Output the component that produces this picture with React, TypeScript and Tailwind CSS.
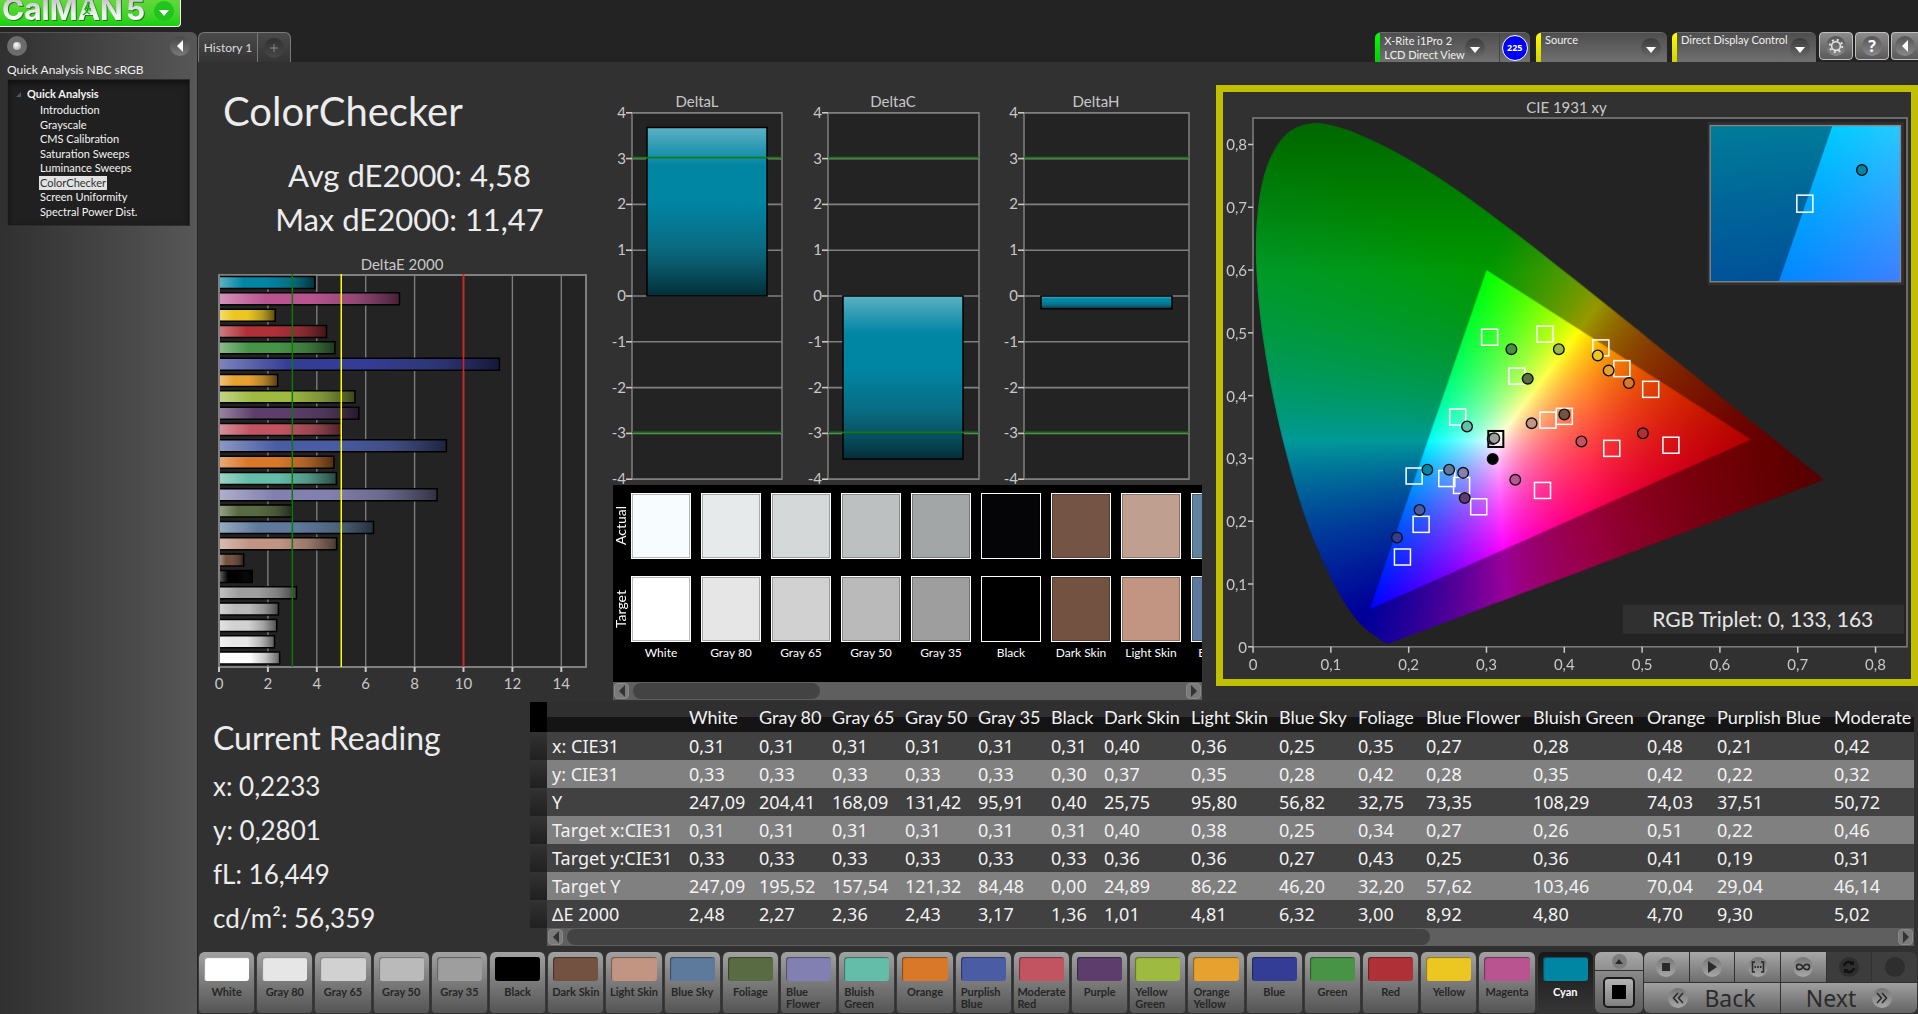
import { useEffect, useRef } from "react";
import type { ReactNode } from "react";
import { clsx } from "clsx";

const UI = "font-[Lato,'Noto_Sans',sans-serif]";
const SEGOE = "font-['Noto_Sans','Open_Sans',sans-serif]";

type Patch = { name: string; color: string; actual?: string; dE: number };

const patches: Patch[] = [
  { name: "White", color: "#ffffff", actual: "#f7fdff", dE: 2.48 },
  { name: "Gray 80", color: "#e6e6e6", actual: "#e6eaeb", dE: 2.27 },
  { name: "Gray 65", color: "#d1d1d1", actual: "#d4d8d9", dE: 2.36 },
  { name: "Gray 50", color: "#bababa", actual: "#bcc0c1", dE: 2.43 },
  { name: "Gray 35", color: "#9e9e9e", actual: "#a2a6a6", dE: 3.17 },
  { name: "Black", color: "#000000", actual: "#050507", dE: 1.36 },
  { name: "Dark Skin", color: "#735242", actual: "#745444", dE: 1.01 },
  { name: "Light Skin", color: "#c29582", actual: "#bf9f8f", dE: 4.81 },
  { name: "Blue Sky", color: "#5d7a9c", actual: "#5f84a1", dE: 6.32 },
  { name: "Foliage", color: "#596b42", dE: 3.0 },
  { name: "Blue Flower", color: "#8280b0", dE: 8.92 },
  { name: "Bluish Green", color: "#63bda8", dE: 4.8 },
  { name: "Orange", color: "#d97829", dE: 4.7 },
  { name: "Purplish Blue", color: "#4a5ca3", dE: 9.3 },
  { name: "Moderate Red", color: "#c25461", dE: 5.02 },
  { name: "Purple", color: "#5c3d6b", dE: 5.72 },
  { name: "Yellow Green", color: "#9eba40", dE: 5.56 },
  { name: "Orange Yellow", color: "#e6a12e", dE: 2.4 },
  { name: "Blue", color: "#333d96", dE: 11.47 },
  { name: "Green", color: "#479447", dE: 4.74 },
  { name: "Red", color: "#b03038", dE: 4.4 },
  { name: "Yellow", color: "#edc721", dE: 2.3 },
  { name: "Magenta", color: "#ba5491", dE: 7.38 },
  { name: "Cyan", color: "#0085a3", dE: 3.92 },
];

const columns = [
  "White", "Gray 80", "Gray 65", "Gray 50", "Gray 35", "Black", "Dark Skin", "Light Skin",
  "Blue Sky", "Foliage", "Blue Flower", "Bluish Green", "Orange", "Purplish Blue", "Moderate",
];

const colWidths = [
  "w-[70px]", "w-[73px]", "w-[73px]", "w-[73px]", "w-[73px]", "w-[53px]", "w-[87px]", "w-[88px]",
  "w-[79px]", "w-[68px]", "w-[107px]", "w-[114px]", "w-[70px]", "w-[117px]", "w-[120px]",
];

const rows: [string, string[]][] = [
  ["x: CIE31", ["0,31", "0,31", "0,31", "0,31", "0,31", "0,31", "0,40", "0,36", "0,25", "0,35", "0,27", "0,28", "0,48", "0,21", "0,42"]],
  ["y: CIE31", ["0,33", "0,33", "0,33", "0,33", "0,33", "0,30", "0,37", "0,35", "0,28", "0,42", "0,28", "0,35", "0,42", "0,22", "0,32"]],
  ["Y", ["247,09", "204,41", "168,09", "131,42", "95,91", "0,40", "25,75", "95,80", "56,82", "32,75", "73,35", "108,29", "74,03", "37,51", "50,72"]],
  ["Target x:CIE31", ["0,31", "0,31", "0,31", "0,31", "0,31", "0,31", "0,40", "0,38", "0,25", "0,34", "0,27", "0,26", "0,51", "0,22", "0,46"]],
  ["Target y:CIE31", ["0,33", "0,33", "0,33", "0,33", "0,33", "0,33", "0,36", "0,36", "0,27", "0,43", "0,25", "0,36", "0,41", "0,19", "0,31"]],
  ["Target Y", ["247,09", "195,52", "157,54", "121,32", "84,48", "0,00", "24,89", "86,22", "46,20", "32,20", "57,62", "103,46", "70,04", "29,04", "46,14"]],
  ["ΔE 2000", ["2,48", "2,27", "2,36", "2,43", "3,17", "1,36", "1,01", "4,81", "6,32", "3,00", "8,92", "4,80", "4,70", "9,30", "5,02"]],
];

const pages = [
  "Introduction", "Grayscale", "CMS Calibration", "Saturation Sweeps",
  "Luminance Sweeps", "ColorChecker", "Screen Uniformity", "Spectral Power Dist.",
];

// CIE 1931 spectral locus, 380-700 nm
const locus: [number, number][] = [
  [0.1741, 0.005], [0.1689, 0.0069], [0.1644, 0.0109],
  [0.1566, 0.0177], [0.144, 0.0297], [0.1355, 0.0399], [0.1241, 0.0578], [0.1096, 0.0868],
  [0.0913, 0.1327], [0.0687, 0.2007], [0.0454, 0.295], [0.0235, 0.4127], [0.0082, 0.5384],
  [0.0039, 0.6548], [0.0139, 0.7502], [0.0389, 0.812], [0.0743, 0.8338], [0.1142, 0.8262],
  [0.1547, 0.8059], [0.1929, 0.7816], [0.2296, 0.7543], [0.2658, 0.7243], [0.3016, 0.6923],
  [0.3373, 0.6589], [0.3731, 0.6245], [0.4087, 0.5896], [0.4441, 0.5547], [0.4788, 0.5202],
  [0.5125, 0.4866], [0.5448, 0.4544], [0.5752, 0.4242], [0.6029, 0.3965], [0.627, 0.3725],
  [0.6482, 0.3514], [0.6658, 0.334], [0.6915, 0.3083], [0.714, 0.2859], [0.726, 0.274],
  [0.734, 0.266],
];

const gamut: [number, number][] = [[0.64, 0.33], [0.3, 0.6], [0.15, 0.06]];

const targets: [number, number][] = [
  [0.304, 0.493], [0.375, 0.498], [0.447, 0.476], [0.474, 0.443], [0.511, 0.41], [0.339, 0.431],
  [0.263, 0.366], [0.379, 0.361], [0.4, 0.367], [0.461, 0.316], [0.537, 0.321], [0.207, 0.272],
  [0.249, 0.268], [0.268, 0.257], [0.29, 0.223], [0.372, 0.249], [0.216, 0.195], [0.192, 0.143],
];

const readings: [number, number, string][] = [
  [0.332, 0.474, "#46923e"], [0.393, 0.474, "#9bb943"], [0.443, 0.464, "#ecc820"],
  [0.457, 0.44, "#e6a22e"], [0.483, 0.42, "#d97829"], [0.353, 0.427, "#596f43"],
  [0.275, 0.351, "#66bdaa"], [0.358, 0.356, "#c19582"], [0.4, 0.37, "#735344"],
  [0.422, 0.327, "#c1525f"], [0.501, 0.34, "#af3138"], [0.308, 0.331, "#666666"],
  [0.31, 0.332, "#a0a0a0"], [0.308, 0.299, "#000000"], [0.224, 0.282, "#0085a3"],
  [0.252, 0.282, "#5d7a9c"], [0.27, 0.277, "#8580b1"], [0.337, 0.266, "#bb5493"],
  [0.272, 0.237, "#5c3d6b"], [0.214, 0.218, "#4a5ba5"], [0.185, 0.174, "#313c96"],
];

function chromaColor(x: number, y: number) {
  const X = x / y;
  const Z = (1 - x - y) / y;
  const lin = [
    3.2406 * X - 1.5372 - 0.4986 * Z,
    -0.9689 * X + 1.8758 + 0.0415 * Z,
    0.0557 * X - 0.204 + 1.057 * Z,
  ].map((v) => Math.max(0, v));
  const peak = Math.max(...lin);
  const fade = 1 - 1.5 * Math.max(0, x - 0.43) - 1.4 * Math.max(0, y - 0.6);
  return lin.map((v) => (255 * fade * v) / peak);
}

type FieldProps = { width: number; height: number; x0: number; y0: number; sx: number; sy: number };

// Chromaticity colour field; x0/y0 are the values at the bottom left corner
function ColorField({ width, height, x0, y0, sx, sy }: FieldProps) {
  const ref = useRef<HTMLCanvasElement>(null);

  useEffect(() => {
    const ctx = ref.current?.getContext("2d");
    if (!ctx) return;
    const image = ctx.createImageData(width, height);
    for (let j = 0; j < height; j++) {
      const y = Math.max(0.002, y0 + (height - j) / sy);
      for (let i = 0; i < width; i++) {
        const [r, g, b] = chromaColor(x0 + i / sx, y);
        image.data.set([r, g, b, 255], (j * width + i) * 4);
      }
    }
    ctx.globalCompositeOperation = "source-over";
    ctx.putImageData(image, 0, 0);

    const toPx = ([x, y]: [number, number]) => [(x - x0) * sx, height - (y - y0) * sy];

    // everything outside the sRGB triangle is dimmed
    ctx.beginPath();
    ctx.rect(0, 0, width, height);
    gamut.map(toPx).forEach(([px, py], n) => (n === 0 ? ctx.moveTo(px, py) : ctx.lineTo(px, py)));
    ctx.closePath();
    ctx.fillStyle = "rgba(0,0,0,0.4)";
    ctx.fill("evenodd");

    // cut to the locus, smoothed through its points
    const pts = locus.map(toPx);
    ctx.globalCompositeOperation = "destination-in";
    ctx.fillStyle = "#000";
    ctx.beginPath();
    ctx.moveTo(pts[0][0], pts[0][1]);
    for (let n = 0; n < pts.length - 1; n++) {
      const a = pts[Math.max(0, n - 1)];
      const b = pts[n];
      const c = pts[n + 1];
      const d = pts[Math.min(pts.length - 1, n + 2)];
      ctx.bezierCurveTo(
        b[0] + (c[0] - a[0]) / 6, b[1] + (c[1] - a[1]) / 6,
        c[0] - (d[0] - b[0]) / 6, c[1] - (d[1] - b[1]) / 6,
        c[0], c[1]
      );
    }
    ctx.closePath();
    ctx.fill();
  }, [width, height, x0, y0, sx, sy]);

  return <canvas ref={ref} width={width} height={height} className="block" />;
}

const label = "fill-[#c8c8c8] font-[Lato,'Noto_Sans',sans-serif] text-[15px]";

function DeltaEChart() {
  const bars = [...patches].reverse();
  const px = (v: number) => 21 + v * 24.45;
  return (
    <svg viewBox="0 0 403 450" className="block w-full" role="img" aria-label="DeltaE 2000 per patch">
      <defs>
        <linearGradient id="shadeX">
          <stop offset="0" stopColor="#fff" stopOpacity=".36" />
          <stop offset=".25" stopColor="#fff" stopOpacity="0" />
          <stop offset=".5" stopColor="#222" stopOpacity="0" />
          <stop offset=".75" stopColor="#222" stopOpacity=".25" />
          <stop offset="1" stopColor="#000" stopOpacity=".62" />
        </linearGradient>
      </defs>
      <text x="204" y="20" textAnchor="middle" className={label}>DeltaE 2000</text>
      <rect x="21" y="25" width="367" height="392" fill="#232323" stroke="#808080" strokeWidth="2" />
      {[2, 4, 6, 8, 10, 12, 14].map((v) => (
        <line key={v} x1={px(v)} x2={px(v)} y1="26" y2="416" stroke="#7c7c7c" strokeWidth="1.4" />
      ))}
      {bars.map((p, i) => {
        const y = 26.5 + i * 16.33;
        const w = p.dE * 24.45 - 1;
        return (
          <g key={p.name}>
            <rect x="22" y={y} width={w} height="12" fill={p.color} />
            <rect x="22" y={y} width={w} height="12" fill="url(#shadeX)" />
            <path d={`M22 ${y}h${w}v12h${-w}`} fill="none" stroke="#000" strokeWidth="1.5" />
          </g>
        );
      })}
      <line x1={px(3)} x2={px(3)} y1="24" y2="417" stroke="#0a7a0a" strokeWidth="1.5" />
      <line x1={px(5)} x2={px(5)} y1="24" y2="417" stroke="#ffff00" strokeWidth="1.5" />
      <line x1={px(10)} x2={px(10)} y1="24" y2="417" stroke="#f01818" strokeWidth="1.5" />
      {[0, 2, 4, 6, 8, 10, 12, 14].map((v) => (
        <g key={v}>
          <line x1={px(v)} x2={px(v)} y1="417" y2="422" stroke="#c8c8c8" strokeWidth="2" />
          <text x={px(v)} y="439" textAnchor="middle" className={label}>{v}</text>
        </g>
      ))}
    </svg>
  );
}

type DeltaPlot = { title: string; center: number; left: number; right: number; bar: [number, number]; value: number };

const deltaPlots: DeltaPlot[] = [
  { title: "DeltaL", center: 96, left: 31, right: 181, bar: [46, 166], value: 3.68 },
  { title: "DeltaC", center: 292, left: 227, right: 378, bar: [242, 362], value: -3.56 },
  { title: "DeltaH", center: 495, left: 423, right: 588, bar: [440, 571], value: -0.28 },
];

function DeltaCharts() {
  const py = (v: number) => 206 - v * 45.8;
  return (
    <svg viewBox="0 0 609 395" className="block w-full" role="img" aria-label="DeltaL, DeltaC and DeltaH">
      <defs>
        <linearGradient id="shadeY" x2="0" y2="1">
          <stop offset="0" stopColor="#fff" stopOpacity=".36" />
          <stop offset=".23" stopColor="#fff" stopOpacity="0" />
          <stop offset=".45" stopColor="#222" stopOpacity="0" />
          <stop offset=".7" stopColor="#222" stopOpacity=".25" />
          <stop offset="1" stopColor="#000" stopOpacity=".66" />
        </linearGradient>
      </defs>
      {deltaPlots.map(({ title, center, left, right, bar, value }) => {
        const top = Math.min(py(value), py(0));
        const box = { x: bar[0], y: top, width: bar[1] - bar[0], height: Math.abs(py(value) - py(0)) };
        return (
          <g key={title}>
            <text x={center} y="17" textAnchor="middle" className={label}>{title}</text>
            <rect x={left} y={py(4)} width={right - left} height={py(-4) - py(4)} fill="#232323" stroke="#808080" strokeWidth="1.5" />
            {[4, 3, 2, 1, 0, -1, -2, -3, -4].map((v) => (
              <g key={v}>
                <line x1={left} x2={right} y1={py(v)} y2={py(v)} stroke="#808080" strokeWidth="1.6" />
                <line x1={left - 6} x2={left} y1={py(v)} y2={py(v)} stroke="#c8c8c8" strokeWidth="1.6" />
                <text x={left - 6} y={py(v) + 5} textAnchor="end" className={label}>{v}</text>
              </g>
            ))}
            <rect {...box} fill="#0085a3" />
            <rect {...box} fill="url(#shadeY)" stroke="#000" strokeWidth="1.5" />
            {[3, -3].map((v) => (
              <line key={v} x1={left} x2={right} y1={py(v) - 1} y2={py(v) - 1} stroke="#107a10" strokeWidth="1.8" />
            ))}
          </g>
        );
      })}
    </svg>
  );
}

function CieChart() {
  const px = (x: number) => 30 + x * 777;
  const py = (y: number) => 554 - y * 627;
  return (
    <svg viewBox="0 0 687 586" className="block w-full" role="img" aria-label="CIE 1931 xy chromaticity diagram">
      <text x="343" y="21" textAnchor="middle" className={label}>CIE 1931 xy</text>
      <rect x="30" y="26" width="653" height="528" fill="#232323" stroke="#808080" strokeWidth="1.5" />
      <foreignObject x="31" y="27" width="651" height="526">
        <ColorField width={651} height={526} x0={0.0013} y0={0.0016} sx={777} sy={627} />
      </foreignObject>
      {[0, 1, 2, 3, 4, 5, 6, 7, 8].map((n) => {
        const text = n === 0 ? "0" : `0,${n}`;
        return (
          <g key={n}>
            <line x1={px(n / 10)} x2={px(n / 10)} y1="554" y2="560" stroke="#c8c8c8" strokeWidth="1.5" />
            <line x1="25" x2="30" y1={py(n / 10)} y2={py(n / 10)} stroke="#c8c8c8" strokeWidth="1.5" />
            <text x={px(n / 10)} y="577" textAnchor="middle" className={label}>{text}</text>
            <text x="24" y={py(n / 10) + 6} textAnchor="end" className={label}>{text}</text>
          </g>
        );
      })}
      {targets.map(([x, y]) => (
        <rect key={`${x}-${y}`} x={px(x) - 8} y={py(y) - 8} width="16" height="16" fill="none" stroke="#fff" strokeWidth="1.5" />
      ))}
      <rect x={px(0.312) - 7.5} y={py(0.331) - 8} width="15" height="16" fill="none" stroke="#000" strokeWidth="2" />
      {readings.map(([x, y, fill]) => (
        <circle key={fill} cx={px(x)} cy={py(y)} r="5.3" fill={fill} stroke="#111" strokeWidth="1.4" />
      ))}

      <rect x="484" y="30" width="196" height="163" fill="#303030" />
      <foreignObject x="487" y="34" width="189" height="155">
        <ColorField width={189} height={155} x0={0.183} y0={0.246} sx={3650} sy={2950} />
      </foreignObject>
      <rect x="486.5" y="33.5" width="190" height="156" fill="none" stroke="#8a8a8a" strokeWidth="1.3" />
      <rect x="573" y="103" width="16" height="17" fill="none" stroke="#fff" strokeWidth="1.5" />
      <circle cx="638" cy="78" r="5.3" fill="#0085a3" stroke="#111" strokeWidth="1.4" />

      <rect x="399" y="512" width="281" height="29" fill="#303030" />
      <text x="539" y="534" textAnchor="middle" className="fill-[#e6e6e6] font-[Lato,sans-serif] text-[21px]">
        RGB Triplet: 0, 133, 163
      </text>
    </svg>
  );
}

function Caret() {
  return (
    <span className="grid size-5 shrink-0 place-items-center rounded-full bg-linear-to-b from-[#3c3c3c] to-[#6a6a6a]">
      <svg viewBox="0 0 10 6" className="mt-1 h-1.5 w-2.5"><path d="M0 0h10L5 6z" fill="#fff" /></svg>
    </span>
  );
}

function ScrollBar({ thumb }: { thumb: string }) {
  const arrow = "grid h-4 w-[15px] shrink-0 place-items-center rounded-sm border border-[#8a8a8a] bg-[#7a7a7a]";
  return (
    <div className="flex h-[18px] items-center gap-1 bg-[#5f5f5f] px-px">
      <button aria-label="Scroll left" className={arrow}>
        <svg viewBox="0 0 6 12" className="h-3 w-1.5"><path d="M6 0v12L0 6z" fill="#333" /></svg>
      </button>
      <div className="flex-1"><div className={clsx("h-4 rounded-lg bg-[#434343]", thumb)} /></div>
      <button aria-label="Scroll right" className={arrow}>
        <svg viewBox="0 0 6 12" className="h-3 w-1.5"><path d="M0 0v12l6-6z" fill="#333" /></svg>
      </button>
    </div>
  );
}

function Header() {
  const tool = "grid h-7 w-[34px] place-items-center rounded-sm border border-[#c0c0c0] bg-linear-to-b from-[#8c8c8c] to-[#5a5a5a]";
  const knob = "grid size-5 place-items-center rounded-full bg-linear-to-b from-[#555] to-[#8a8a8a]";
  const device = "flex h-[30px] whitespace-nowrap rounded-t-md border-t border-[#6a6a6a] bg-linear-to-b from-[#4e4e4e] to-[#707070] text-[11px] leading-[14px] text-[#f0f0f0]";
  return (
    <div className="flex h-[30px] items-start">
      <button className="flex h-full w-[59px] items-center justify-center rounded-tl-md border-l border-t border-[#7a7a7a] bg-linear-to-b from-[#4a4a4a] to-[#343434] text-[12px] text-[#dcdcdc]">
        History 1
      </button>
      <button aria-label="New history" className="flex h-full w-[34px] items-center justify-center rounded-tr-md border-x border-t border-[#7a7a7a] bg-linear-to-b from-[#4a4a4a] to-[#343434]">
        <span className="grid size-5 place-items-center rounded-full bg-linear-to-b from-[#303030] to-[#484848]">
          <svg viewBox="0 0 8 8" className="size-2"><path d="M4 0v8M0 4h8" stroke="#8a8a8a" /></svg>
        </span>
      </button>
      <div className="ml-auto flex items-start">
        <div className={clsx(device, "w-[155px]")}>
          <span className="w-1.5 rounded-tl-md bg-linear-to-b from-[#00ff00] to-[#00cf00]" />
          <button className="flex flex-1 items-center justify-between pl-1 pr-3.5 text-left">
            <span>X-Rite i1Pro 2<br />LCD Direct View</span>
            <Caret />
          </button>
          <span className="w-px bg-[#454545]" />
          <span className="grid w-[34px] place-items-center">
            <span className={clsx("grid size-[26px] place-items-center rounded-full border border-white bg-[#0000ff] text-[9px] font-bold text-white", SEGOE)}>225</span>
          </span>
        </div>
        <div className={clsx(device, "ml-1.5 w-[131px]")}>
          <span className="w-[5px] rounded-tl-md bg-linear-to-b from-[#ffff00] to-[#d0d000]" />
          <button className="flex flex-1 items-center justify-between pl-1 pr-1.5">
            <span className="self-start">Source</span><Caret />
          </button>
        </div>
        <div className={clsx(device, "ml-[5px] w-[144px]")}>
          <span className="w-[5px] rounded-tl-md bg-linear-to-b from-[#ffff00] to-[#d0d000]" />
          <button className="flex flex-1 items-center justify-between pl-1 pr-1.5">
            <span className="self-start">Direct Display Control</span><Caret />
          </button>
        </div>
        <div className="ml-[3px] flex gap-0.5">
          <button aria-label="Settings" className={tool}>
            <span className={knob}>
              <svg viewBox="0 0 16 16" className="size-4" fill="none" stroke="#e0e0e0">
                <circle cx="8" cy="8" r="4.4" strokeWidth="1.6" />
                <circle cx="8" cy="8" r="6.2" strokeWidth="2" strokeDasharray="2 2.87" />
              </svg>
            </span>
          </button>
          <button aria-label="Help" className={clsx(tool, SEGOE)}>
            <span className={clsx(knob, "text-[16px] font-bold leading-none text-white")}>?</span>
          </button>
          <button aria-label="Collapse" className="grid h-7 w-[27px] place-items-center rounded-l-sm border-y border-l border-[#c0c0c0] bg-linear-to-b from-[#8c8c8c] to-[#5a5a5a]">
            <span className={knob}><svg viewBox="0 0 6 12" className="h-3 w-1.5"><path d="M6 0v12L0 6z" fill="#fff" /></svg></span>
          </button>
        </div>
      </div>
    </div>
  );
}

function Sidebar() {
  return (
    <aside className="w-[197px] shrink-0 rounded-tr-md border-t border-[#555] bg-linear-to-r from-[#303030] to-[#575757] px-[7px] pt-[3px]">
      <div className="flex items-center justify-between">
        <button aria-label="Record" className="grid size-5 place-items-center rounded-full bg-[#6c6c6c]">
          <span className="size-2 rounded-full bg-radial-[at_40%_35%] from-white to-[#909090]" />
        </button>
        <button aria-label="Hide panel" className="grid size-5 place-items-center rounded-full bg-linear-to-b from-[#484848] to-[#7a7a7a]">
          <svg viewBox="0 0 6 12" className="h-3 w-1.5"><path d="M6 0v12L0 6z" fill="#fff" /></svg>
        </button>
      </div>
      <h2 className="mt-[5px] text-[12px] leading-[18px] text-[#f0f0f0]">Quick Analysis NBC sRGB</h2>
      <nav className="h-[147px] border border-[#2c2c2c] bg-[#202020] pt-[7px] text-[11px] leading-[14px] text-[#f4f4f4] shadow-[inset_0_3px_6px_#0008]">
        <div className="flex items-center gap-1.5 pl-2 font-bold">
          <svg viewBox="0 0 5 5" className="size-[5px]"><path d="M5 0v5H0z" fill="#555" /></svg>
          Quick Analysis
        </div>
        <ul className="mt-0.5 flex h-[116px] flex-col justify-between pl-[31px]">
          {pages.map((page) => (
            <li key={page} className="flex">
              <a href="#" className={clsx("px-px", page === "ColorChecker" && "bg-[#e2e2e2] text-[#303030]")}>{page}</a>
            </li>
          ))}
        </ul>
      </nav>
    </aside>
  );
}

function Swatches() {
  return (
    <div className="ml-3 mr-2">
      <div className="flex h-[197px] overflow-hidden bg-black pt-2 text-[12px] text-white">
        <div className="w-[18px] shrink-0 pr-0.5 text-[14px] leading-none">
          <div className="grid h-[66px] place-items-center"><span className="[writing-mode:vertical-rl] rotate-180">Actual</span></div>
          <div className="mt-[17px] grid h-[66px] place-items-center"><span className="[writing-mode:vertical-rl] rotate-180">Target</span></div>
        </div>
        <div className="flex gap-2.5">
          {patches.slice(0, 9).map((p) => (
            <div key={p.name} className="flex w-[60px] shrink-0 flex-col items-center">
              <span className="h-[66px] w-full border border-white shadow-[inset_0_0_0_1px_#0004]" style={{ background: p.actual }} />
              <span className="mt-[17px] h-[66px] w-full border border-white shadow-[inset_0_0_0_1px_#0004]" style={{ background: p.color }} />
              <span className="mt-0.5 whitespace-nowrap leading-[18px]">{p.name}</span>
            </div>
          ))}
        </div>
      </div>
      <ScrollBar thumb="w-[34%]" />
    </div>
  );
}

function ReadingsTable() {
  return (
    <div className="mr-1 min-w-0 flex-1">
      <div className="overflow-hidden">
        <table className="w-[1419px] table-fixed border-collapse text-left text-[#f2f2f2]">
          <colgroup>
            <col className="w-[17px]" />
            <col className="w-[137px]" />
            {colWidths.map((w, i) => <col key={i} className={w} />)}
          </colgroup>
          <thead>
            <tr className="h-[30px] bg-linear-to-b from-[#2f2f2f] from-50% to-[#141414] to-50% text-[18px] leading-[28px]">
              <td className="bg-black" />
              <td />
              {columns.map((c) => <th key={c} scope="col" className="whitespace-nowrap pl-[5px] font-normal">{c}</th>)}
            </tr>
          </thead>
          <tbody className={clsx("text-[18px] leading-[28px]", SEGOE)}>
            {rows.map(([name, values]) => (
              <tr key={name} className="h-7 bg-[#414141] even:bg-[#808080]">
                <td className="bg-linear-to-b from-[#333] to-[#202020]" />
                <th scope="row" className="whitespace-nowrap pl-[5px] font-normal">{name}</th>
                {values.map((v, i) => <td key={i} className="pl-[5px]">{v}</td>)}
              </tr>
            ))}
          </tbody>
        </table>
      </div>
      <div className="ml-[17px]"><ScrollBar thumb="w-[65%]" /></div>
    </div>
  );
}

function Knob({ dark = false, children }: { dark?: boolean; children?: ReactNode }) {
  return (
    <span className={clsx("grid size-5 shrink-0 place-items-center rounded-full", dark ? "bg-[#2e2e2e]" : "bg-linear-to-b from-[#757575] to-[#a8a8a8]")}>
      <svg viewBox="0 0 16 16" className="size-4" fill="none" stroke="#2a2a2a" strokeWidth="1.6">{children}</svg>
    </span>
  );
}

function BottomBar() {
  const key = "grid flex-1 place-items-center bg-linear-to-b from-[#a8a8a8] to-[#6e6e6e]";
  const wide = "flex flex-1 items-center justify-center gap-4 bg-linear-to-b from-[#a0a0a0] to-[#646464]";
  return (
    <div className="flex h-[61px] gap-px pr-px">
      <div className="flex flex-1 gap-px">
        {patches.map((p) => {
          const active = p.name === "Cyan";
          const oneLine = p.name.endsWith("Skin") || p.name.startsWith("Gray") || p.name === "Blue Sky";
          return (
            <button
              key={p.name}
              className={clsx(
                "flex min-w-0 flex-1 flex-col items-center rounded-t-md rounded-b-sm border-x border-[#3a3a3a] px-[5px] pt-[5px] text-[11px] font-bold leading-3",
                active ? "bg-linear-to-b from-[#181818] to-[#363636] text-white" : "bg-linear-to-b from-[#a2a2a2] to-[#555] text-[#262626]"
              )}
            >
              <span className="h-6 w-full rounded-[3px] shadow-[inset_1px_1px_1px_#0006]" style={{ background: p.color }} />
              <span className={clsx("mt-[5px] text-left", oneLine && "whitespace-nowrap")}>{p.name}</span>
            </button>
          );
        })}
      </div>
      <div className="flex w-12 flex-col gap-px overflow-hidden rounded-md">
        <button aria-label="Expand" className="grid h-[18px] place-items-center bg-linear-to-b from-[#a8a8a8] to-[#909090]">
          <span className="grid size-[15px] place-items-center rounded-full bg-[#7c7c7c]">
            <svg viewBox="0 0 8 5" className="h-[5px] w-2"><path d="M0 5h8L4 0z" fill="#2a2a2a" /></svg>
          </span>
        </button>
        <button aria-label="Pattern window" className="grid flex-1 place-items-center bg-linear-to-b from-[#8a8a8a] to-[#5c5c5c]">
          <span className="grid h-[31px] w-8 place-items-center rounded-[5px] border-2 border-[#1a1a1a] bg-linear-to-b from-[#b4b4b4] to-[#808080]">
            <span className="size-3.5 bg-black" />
          </span>
        </button>
      </div>
      <div className="flex w-[273px] flex-col gap-px overflow-hidden rounded-md">
        <div className="flex h-[30px] gap-px">
          <button aria-label="Stop" className={key}><Knob><path d="M4 4h8v8H4z" fill="#2a2a2a" stroke="none" /></Knob></button>
          <button aria-label="Play" className={key}><Knob><path d="M4 2l9 6-9 6z" fill="#2a2a2a" stroke="none" /></Knob></button>
          <button aria-label="Read series" className={key}><Knob><path d="M5 3H2.500v10H5M11 3h2.500v10H11" /><path d="M4.500 8h7" strokeDasharray="1.600 1.100" strokeWidth="2" /></Knob></button>
          <button aria-label="Read continuous" className={key}><Knob><path d="M8 8c-2-3.500-6.500-3.500-6.500 0s4.500 3.500 6.500 0 6.500-3.500 6.500 0-4.500 3.500-6.500 0z" /></Knob></button>
          <button aria-label="Refresh" className="grid flex-1 place-items-center bg-[#3c3c3c]">
            <Knob dark>
              <g stroke="#111" strokeWidth="2.400"><path d="M3 7a5 5 0 0 1 8.500-2.500M13 9a5 5 0 0 1-8.500 2.500" /><path d="M13 1.500v4.500H8.500zM3 14.500V10h4.500z" fill="#111" stroke="none" /></g>
            </Knob>
          </button>
          <button aria-label="More" className="grid flex-1 place-items-center bg-[#3e3e3e]"><Knob dark /></button>
        </div>
        <div className={clsx("flex flex-1 gap-px text-[23px] leading-none text-[#2b2b2b]", SEGOE)}>
          <button className={wide}><Knob><path d="M8 3L3.500 8 8 13M13 3L8.500 8l4.500 5" /></Knob>Back</button>
          <button className={wide}>Next<Knob><path d="M3 3l4.500 5L3 13M8 3l4.500 5L8 13" /></Knob></button>
        </div>
      </div>
    </div>
  );
}

function Logo() {
  return (
    <button className="flex h-[27px] w-[181px] items-center overflow-hidden rounded-br-sm border-b border-r border-white bg-linear-to-b from-[#62d83c] to-[#0fd00f]">
      <svg viewBox="0 0 180 26" className="h-[26px] w-[180px]" role="img" aria-label="CalMAN 5">
        <defs>
          <linearGradient id="chrome" x2="0" y2="1">
            <stop offset=".2" stopColor="#c4c4c4" />
            <stop offset=".8" stopColor="#fff" />
          </linearGradient>
        </defs>
        <g fill="url(#chrome)" className="font-[Inter,sans-serif] text-[30px] font-bold drop-shadow-[1px_1px_0_#1c7a1c]">
          <text x="2" y="20">CalMAN</text><text x="126" y="20">5</text>
        </g>
        <path d="M88 4l-3 5 2 3-4 3M86 8l5 1M87 12l3 2" stroke="#1fae1f" strokeWidth="1.5" fill="none" />
        <circle cx="88.500" cy="3" r="1.500" fill="#1fae1f" />
        <circle cx="164" cy="11" r="10" fill="#1fc41f" />
        <path d="M159 10h10l-5 6z" fill="#fff" />
      </svg>
    </button>
  );
}

export default function App() {
  return (
    <div className={clsx("flex min-h-screen flex-col overflow-hidden bg-[#232323] text-[#ececec]", UI)}>
      <div className="flex h-8 items-start"><Logo /></div>
      <div className="flex flex-1">
        <Sidebar />
        <main className="ml-px flex min-w-0 flex-1 flex-col">
          <Header />
          <div className="flex flex-1 flex-col bg-[#313131]">
            <div className="grid grid-cols-[403fr_609fr_708fr]">
              <section className="min-w-0 pt-5">
                <h1 className="pl-[25px] text-[40px] leading-[58px]">ColorChecker</h1>
                <div className="pl-5 pt-[13px] text-center text-[31px] leading-[44px]">
                  <p>Avg dE2000: 4,58</p>
                  <p>Max dE2000: 11,47</p>
                </div>
                <div className="pt-[9px]"><DeltaEChart /></div>
              </section>
              <section className="min-w-0 pb-0.5 pt-7">
                <DeltaCharts />
                <Swatches />
              </section>
              <section className="min-w-0 pl-1.5 pt-[23px]">
                <div className="border-[7px] border-[#c0bf00]"><CieChart /></div>
              </section>
            </div>
            <div className="flex">
              <section className="w-[332px] shrink-0 pl-[15px] pt-3.5 text-[26px] leading-[44px]">
                <h2 className="pb-1 text-[32px]">Current Reading</h2>
                <p>x: 0,2233</p>
                <p>y: 0,2801</p>
                <p>fL: 16,449</p>
                <p>cd/m²: 56,359</p>
              </section>
              <ReadingsTable />
            </div>
            <div className="mt-auto pb-px"><BottomBar /></div>
          </div>
        </main>
      </div>
    </div>
  );
}
